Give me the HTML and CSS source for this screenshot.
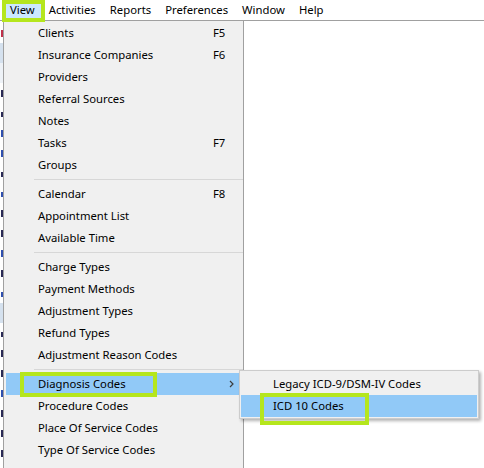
FILE: index.html
```html
<!DOCTYPE html>
<html>
<head>
<meta charset="utf-8">
<link rel="stylesheet" href="styles.css">
</head>
<body>
<div class="menubar">
  <span class="mb-item active">View<span class="mark mark-view"></span></span>
  <span class="mb-item">Activities</span>
  <span class="mb-item">Reports</span>
  <span class="mb-item">Preferences</span>
  <span class="mb-item">Window</span>
  <span class="mb-item">Help</span>
</div>
<div class="workspace">
  <div class="leftpane">
    <div class="lp-line"><span class="glyph red"></span></div>
    <div class="lp-line band"></div>
    <div class="lp-line band2"></div>
    <div class="lp-line"><span class="glyph"></span></div>
    <div class="lp-line"><span class="glyph short"></span></div>
    <div class="lp-line"><span class="glyph blue"></span></div>
    <div class="lp-line"><span class="glyph blue"></span></div>
    <div class="lp-line"><span class="glyph short"></span></div>
    <div class="lp-line"><span class="glyph blue short"></span></div>
    <div class="lp-line"><span class="glyph"></span></div>
    <div class="lp-line"><span class="glyph"></span></div>
    <div class="lp-line"><span class="glyph blue"></span></div>
    <div class="lp-line"><span class="glyph"></span></div>
    <div class="lp-line"><span class="glyph blue short"></span></div>
    <div class="lp-line band"></div>
    <div class="lp-line"><span class="glyph short"></span></div>
    <div class="lp-line"><span class="glyph"></span></div>
    <div class="lp-line"><span class="glyph"></span></div>
    <div class="lp-line"><span class="glyph blue"></span></div>
    <div class="lp-line"><span class="glyph"></span></div>
    <div class="lp-line"><span class="glyph"></span></div>
    <div class="lp-line"><span class="glyph"></span></div>
  </div>
  <div class="content"></div>
  <div class="dropdown">
    <div class="item"><span>Clients</span><span class="key">F5</span></div>
    <div class="item"><span>Insurance Companies</span><span class="key">F6</span></div>
    <div class="item"><span>Providers</span><span></span></div>
    <div class="item"><span>Referral Sources</span><span></span></div>
    <div class="item"><span>Notes</span><span></span></div>
    <div class="item"><span>Tasks</span><span class="key">F7</span></div>
    <div class="item"><span>Groups</span><span></span></div>
    <div class="sep"></div>
    <div class="item"><span>Calendar</span><span class="key">F8</span></div>
    <div class="item"><span>Appointment List</span><span></span></div>
    <div class="item"><span>Available Time</span><span></span></div>
    <div class="sep"></div>
    <div class="item"><span>Charge Types</span><span></span></div>
    <div class="item"><span>Payment Methods</span><span></span></div>
    <div class="item"><span>Adjustment Types</span><span></span></div>
    <div class="item"><span>Refund Types</span><span></span></div>
    <div class="item"><span>Adjustment Reason Codes</span><span></span></div>
    <div class="sep"></div>
    <div class="item hl">
      <span>Diagnosis Codes</span>
      <span class="arrow"><svg width="5" height="8" viewBox="0 0 5 8"><path d="M1 1 L4 4 L1 7" fill="none" stroke="#3c3c3c" stroke-width="1.2"/></svg></span>
      <span class="mark mark-diag"></span>
      <div class="submenu">
        <div class="sub-item">Legacy ICD-9/DSM-IV Codes</div>
        <div class="sub-item hl">ICD 10 Codes<span class="mark mark-icd"></span></div>
      </div>
    </div>
    <div class="item"><span>Procedure Codes</span><span></span></div>
    <div class="item"><span>Place Of Service Codes</span><span></span></div>
    <div class="item"><span>Type Of Service Codes</span><span></span></div>
    <div class="item"><span>Referral Types</span><span></span></div>
  </div>
</div>
</body>
</html>
```
FILE: styles.css
```css
* { box-sizing: border-box; margin: 0; padding: 0; }
html, body { width: 484px; height: 468px; overflow: hidden; background: #fff; }
body { font-family: "Noto Sans", "Segoe UI", sans-serif; font-size: 11.3px; color: #000; }

.menubar { height: 20px; display: flex; align-items: center; padding-left: 3px; background: #fff; position: relative; z-index: 5; }
.mb-item { position: relative; padding: 0 7px; height: 20px; line-height: 20px; white-space: nowrap; }
.mb-item.active { background: #cce8ff; }

.mark { position: absolute; border: 4px solid #b5e61d; pointer-events: none; z-index: 6; }
.mark-view { left: -1px; top: 0; width: 43px; height: 22px; }
.mark-diag { left: 14px; top: -1px; width: 137px; height: 25px; }
.mark-icd { left: 19px; top: -2px; width: 109px; height: 32px; }

.workspace { position: relative; height: 448px; border-top: 1px solid #a0a0a0; display: flex; }
.leftpane { width: 3px; overflow: hidden; padding-top: 2px; }
.lp-line { height: 20px; display: flex; align-items: center; justify-content: flex-end; }
.glyph { display: block; width: 2px; height: 7px; background: #2a2a55; }
.glyph.short { height: 5px; margin-top: 2px; }
.glyph.red { background: #c0304a; }
.glyph.blue { background: #2f4fae; }
.lp-line.band { background: #d5e1ee; }
.lp-line.band2 { background: #eef2f7; }
.content { flex: 1; background: #fff; }

.dropdown { position: absolute; left: 3px; top: 0; width: 241px; height: 470px; background: #f0f0f0; border-left: 1px solid #a0a0a0; border-right: 1px solid #a0a0a0; padding-top: 1px; }
.item { display: grid; grid-template-columns: 1fr 28px; height: 22px; line-height: 22px; margin: 0 2px; padding-left: 32px; white-space: nowrap; position: relative; }
.item.hl { background: #91c9f7; }
.key { text-align: left; }
.arrow { display: flex; align-items: center; padding-left: 16px; }
.arrow svg { display: block; }
.sep { height: 1px; background: #d7d7d7; margin: 3px 0 3px 30px; }

.submenu { position: absolute; left: 233px; top: -3px; width: 240px; background: #f0f0f0; border: 1px solid #cccccc; padding: 2px 0 1px; box-shadow: 2px 2px 3px rgba(0, 0, 0, 0.3); z-index: 3; }
.sub-item { height: 22px; line-height: 22px; margin: 0 1px; padding-left: 32px; white-space: nowrap; position: relative; }
.sub-item.hl { background: #91c9f7; }
```
